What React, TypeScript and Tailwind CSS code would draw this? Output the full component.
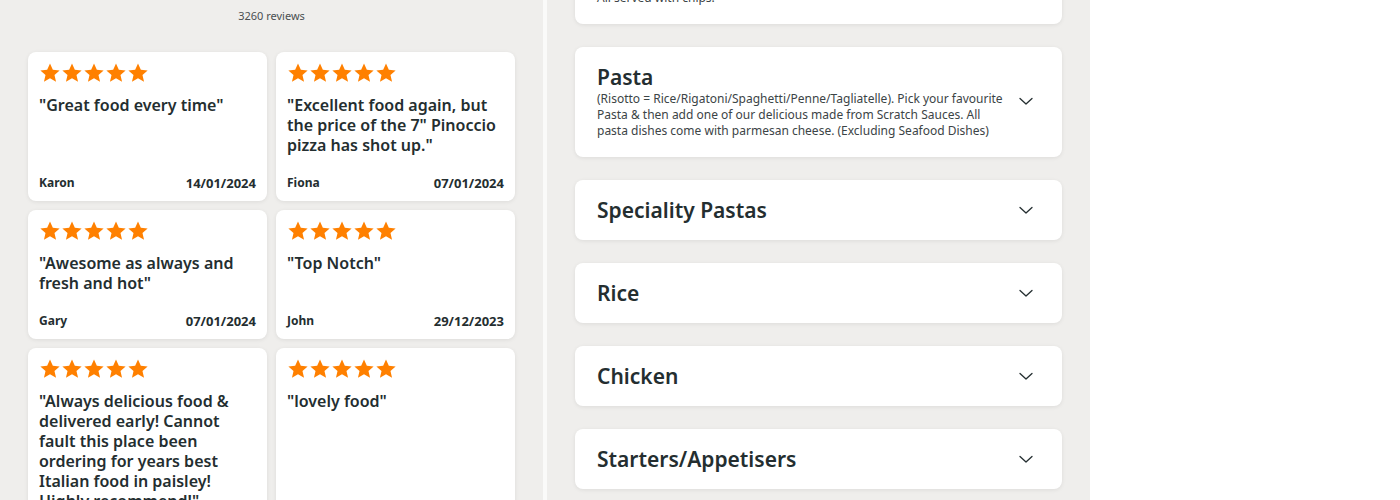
import React from 'react';

interface Review {
  text: string;
  name: string;
  date: string;
}

const reviews: Review[] = [
  { text: '"Great food every time"', name: 'Karon', date: '14/01/2024' },
  { text: '"Excellent food again, but the price of the 7" Pinoccio pizza has shot up."', name: 'Fiona', date: '07/01/2024' },
  { text: '"Awesome as always and fresh and hot"', name: 'Gary', date: '07/01/2024' },
  { text: '"Top Notch"', name: 'John', date: '29/12/2023' },
  {
    text: '"Always delicious food & delivered early! Cannot fault this place been ordering for years best Italian food in paisley! Highly recommend!"',
    name: 'Stephen',
    date: '28/12/2023',
  },
  { text: '"lovely food"', name: 'Anne', date: '27/12/2023' },
];

const categories = ['Speciality Pastas', 'Rice', 'Chicken', 'Starters/Appetisers'];

const Star = () => (
  <svg width="22" height="22" viewBox="0 0 24 24" className="shrink-0">
    <path
      fill="#ff8000"
      d="M12 1.6l3.1 6.9 7.4.7-5.6 5 1.7 7.4L12 17.7l-6.6 3.9 1.7-7.4-5.6-5 7.4-.7z"
    />
  </svg>
);

const Chevron = () => (
  <svg width="16" height="10" viewBox="0 0 16 10" className="shrink-0">
    <path d="M2 2.5l6 5.6 6-5.6" fill="none" stroke="#242e30" strokeWidth="1.3" strokeLinecap="round" strokeLinejoin="round" />
  </svg>
);

const ReviewCard: React.FC<{ review: Review }> = ({ review }) => (
  <div className="flex flex-col rounded-lg bg-white px-[11px] pt-[10px] pb-[10px] shadow-[0_1px_4px_rgba(0,0,0,0.08)]">
    <div className="flex">
      {[0, 1, 2, 3, 4].map((i) => (
        <Star key={i} />
      ))}
    </div>
    <p className="mt-[11px] text-[16px] leading-[20px] font-semibold text-[#242e30]">{review.text}</p>
    <div className="mt-auto flex items-center justify-between pt-5 leading-4 font-bold text-[#242e30]">
      <span className="text-[12px]">{review.name}</span>
      <span className="text-[13px]">{review.date}</span>
    </div>
  </div>
);

const CategoryCard: React.FC<{ title: string; description?: string }> = ({ title, description }) => (
  <div
    className={`flex items-center justify-between rounded-lg bg-white pl-[22px] pr-[28px] pt-4 shadow-[0_1px_4px_rgba(0,0,0,0.08)] ${
      description ? 'pb-[18px]' : 'pb-4'
    }`}
  >
    <div className="w-[416px]">
      <h3 className="text-[21px] leading-7 font-semibold text-[#242e30]">{title}</h3>
      {description && <p className="text-[12px] leading-4 text-[#3c4446]">{description}</p>}
    </div>
    <Chevron />
  </div>
);

export default function App() {
  return (
    <div className="flex h-[500px] overflow-hidden bg-white font-['Noto_Sans',sans-serif]">
      <section className="w-[543px] shrink-0 bg-[#efeeec] px-7 pt-2">
        <p className="text-center text-[11px] leading-4 text-[#4a4f51]">3260 reviews</p>
        <div className="mt-7 grid grid-cols-2 gap-[9px]">
          {reviews.map((r, i) => (
            <ReviewCard key={i} review={r} />
          ))}
        </div>
      </section>
      <div className="w-1 shrink-0 bg-[#fafaf9]" />
      <section className="w-[543px] shrink-0 bg-[#efeeec] px-7">
        <div className="-mt-[54px] flex flex-col gap-[23px]">
          <CategoryCard title="Burgers" description="All served with chips." />
          <CategoryCard
            title="Pasta"
            description="(Risotto = Rice/Rigatoni/Spaghetti/Penne/Tagliatelle). Pick your favourite Pasta & then add one of our delicious made from Scratch Sauces. All pasta dishes come with parmesan cheese. (Excluding Seafood Dishes)"
          />
          {categories.map((c) => (
            <CategoryCard key={c} title={c} />
          ))}
        </div>
      </section>
      <div className="flex-1 bg-white" />
    </div>
  );
}
